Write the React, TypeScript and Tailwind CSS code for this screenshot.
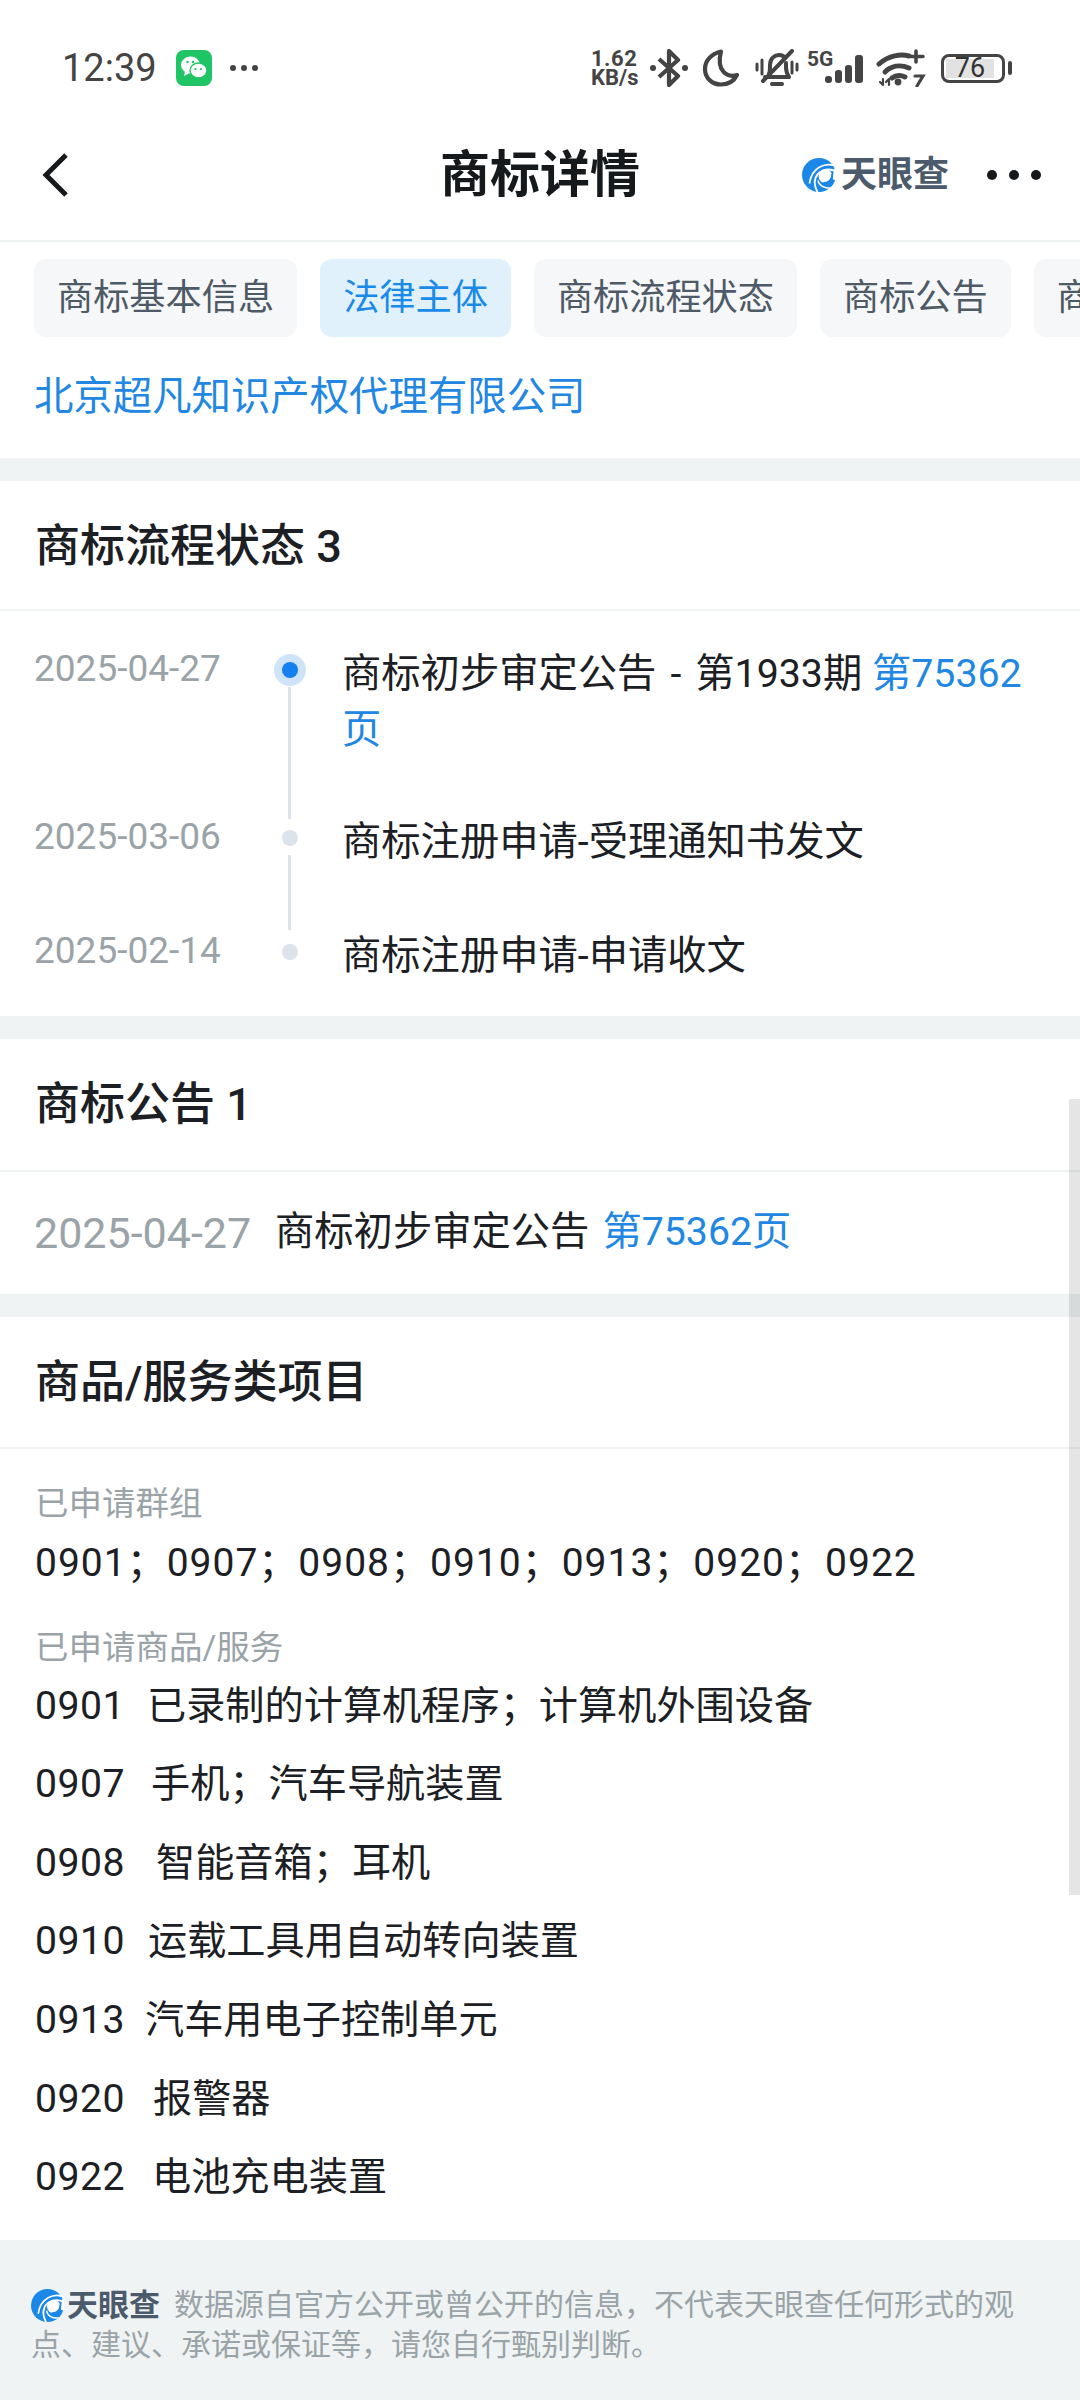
import React from 'react';

const chips = ['商标基本信息', '法律主体', '商标流程状态', '商标公告', '商标注册'];

const goods = [
    { code: '0901', name: '已录制的计算机程序；计算机外围设备', width: 'w-[112px]' },
    { code: '0907', name: '手机；汽车导航装置', width: 'w-[116px]' },
    { code: '0908', name: '智能音箱；耳机', width: 'w-[121px]' },
    { code: '0910', name: '运载工具用自动转向装置', width: 'w-[113px]' },
    { code: '0913', name: '汽车用电子控制单元', width: 'w-[110px]' },
    { code: '0920', name: '报警器', width: 'w-[118px]' },
    { code: '0922', name: '电池充电装置', width: 'w-[117px]' },
];

function LogoMark(props: { size: number }) {
    return (
        <svg width={props.size} height={props.size} viewBox="0 0 32 32" className="shrink-0">
            <circle cx="16" cy="16" r="16" fill="#1b87e6" />
            <path d="M33 8C22 3 9 9 7 24" fill="none" stroke="#fff" strokeWidth="1.6" />
            <path d="M33 13C24 8 13 12 12 22C11.6 26 13 29 15 33" fill="none" stroke="#fff" strokeWidth="1.8" />
            <path d="M15 21C16 26 21 29 27 28" fill="none" stroke="#fff" strokeWidth="1.4" />
            <circle cx="22" cy="17" r="6.5" fill="#fff" />
            <path d="M28.5 15C29 20 25 24 20 23.5" fill="none" stroke="#1b87e6" strokeWidth="2" />
            <path d="M30 10L34 10L34 22L29 20Z" fill="#fff" />
        </svg>
    );
}

function StatusIcons() {
    return (
        <div className="ml-auto mr-[68px] flex items-center">
            <div className="flex w-[50px] flex-col text-[22px] font-bold leading-[19px] text-[#444]">
                <span className="tracking-[0.5px]">1.62</span>
                <span>KB/s</span>
            </div>
            {/* bluetooth */}
            <svg width="38" height="38" viewBox="0 0 38 38" className="ml-[9px]" fill="none" stroke="#444" strokeWidth="4.2" strokeLinejoin="round">
                <path d="M9 10L28 27L19 36V2L28 11L9 28" />
                <circle cx="3" cy="19" r="3" fill="#444" stroke="none" />
                <circle cx="35" cy="19" r="3" fill="#444" stroke="none" />
            </svg>
            {/* moon */}
            <svg width="38" height="38" viewBox="0 0 38 38" className="ml-[14px]" fill="none" stroke="#444" strokeWidth="4.2" strokeLinejoin="round">
                <path d="M19 2.5C9 5 3 12 3 20C3 29 10 35.5 19 35.5C26 35.5 32 32 35 26C25 29 14 22 19 2.5Z" />
            </svg>
            {/* muted bell */}
            <svg width="44" height="38" viewBox="0 0 44 38" className="ml-[15px]" fill="none" stroke="#444" strokeWidth="4" strokeLinecap="round">
                <path d="M14 25C15 23 15 20 15 16C15 9 20 6 24 6C27 6 29 7 30 9M31 14V18C31 22 32 25 34 28H10" strokeLinejoin="round" />
                <path d="M37 2L8 32" />
                <path d="M17 35H27" />
                <path d="M2 15V21M7 11V25M37 13V24M42 15V21" strokeWidth="3" />
            </svg>
            <div className="ml-[8px] flex h-[38px] w-[70px] items-start">
                <span className="text-[21px] font-bold leading-[20px] text-[#444]">5G</span>
                {/* signal */}
                <svg width="44" height="30" viewBox="0 0 44 30" className="ml-[-8px] mt-[5px] shrink-0" fill="#444">
                    <rect x="0" y="22" width="7" height="7" rx="3" />
                    <rect x="10" y="16" width="7" height="13" rx="3" />
                    <rect x="20" y="11" width="7" height="18" rx="3" />
                    <rect x="30" y="1" width="8" height="28" rx="3" />
                </svg>
            </div>
            {/* wifi */}
            <svg width="52" height="38" viewBox="0 0 52 38" className="ml-[-1px]" fill="none" stroke="#444" strokeLinecap="round">
                <path d="M3 15C13 6 25 5 33 7" strokeWidth="5" />
                <path d="M9 23C15 17 24 15 33 19" strokeWidth="5" />
                <path d="M16 29C20 26 25 26 29 28" strokeWidth="5" />
                <path d="M40 2V13M35 7.5H47" strokeWidth="3.6" />
                <circle cx="22" cy="33" r="3.4" fill="#444" stroke="none" />
                <path d="M7 30V36M13 30V36M4 33L7 36M10 33L13 30" strokeWidth="2.2" />
                <path d="M39 27H47L41 37" strokeWidth="3.2" />
            </svg>
            {/* battery */}
            <div className="ml-[13px] flex items-center">
                <div className="flex h-[29px] w-[64px] items-center rounded-[8px] border-[3px] border-[#444] p-[2px] pr-[8px]">
                    <div className="flex h-full w-full items-center justify-center bg-[#e2e2e2] text-[27px] leading-none text-[#333]">76</div>
                </div>
                <div className="ml-[3px] h-[14px] w-[4px] rounded-full bg-[#444]" />
            </div>
        </div>
    );
}

function StatusBar() {
    return (
        <div className="flex h-[136px] items-center pl-[62px]">
            <span className="text-[38px] leading-none text-[#444]">12:39</span>
            <div className="ml-[19px] flex h-[36px] w-[36px] items-center justify-center rounded-[8px] bg-[#1fc465]">
                <svg width="28" height="26" viewBox="0 0 28 26">
                    <ellipse cx="10.5" cy="10" rx="9.5" ry="8.5" fill="#fff" />
                    <path d="M5 16L4 21L10 18Z" fill="#fff" />
                    <ellipse cx="18.5" cy="15.5" rx="8.5" ry="7.5" fill="#fff" stroke="#1fc465" strokeWidth="1.4" />
                    <circle cx="7.5" cy="7" r="1.2" fill="#1fc465" />
                    <circle cx="13" cy="7" r="1.2" fill="#1fc465" />
                    <circle cx="15.5" cy="14" r="1.1" fill="#1fc465" />
                    <circle cx="21" cy="14" r="1.1" fill="#1fc465" />
                </svg>
            </div>
            <div className="ml-[18px] flex gap-[5px]">
                <span className="h-[6px] w-[6px] rounded-full bg-[#444]" />
                <span className="h-[6px] w-[6px] rounded-full bg-[#444]" />
                <span className="h-[6px] w-[6px] rounded-full bg-[#444]" />
            </div>
            <StatusIcons />
        </div>
    );
}

function NavBar() {
    return (
        <div className="relative flex h-[78px] items-center justify-between pl-[40px] pr-[39px]">
            <svg width="30" height="46" viewBox="0 0 30 46" fill="none" stroke="#16191c" strokeWidth="5">
                <path d="M26 3L6 23L26 43" />
            </svg>
            <span className="absolute left-[440px] text-[50px] font-bold leading-none text-[#16191c]">商标详情</span>
            <div className="flex items-center">
                <LogoMark size={34} />
                <span className="ml-[5px] text-[36px] font-bold leading-none text-[#4c5b6b]">天眼查</span>
                <div className="ml-[38px] flex gap-[12px]">
                    <span className="h-[10px] w-[10px] rounded-full bg-[#16191c]" />
                    <span className="h-[10px] w-[10px] rounded-full bg-[#16191c]" />
                    <span className="h-[10px] w-[10px] rounded-full bg-[#16191c]" />
                </div>
            </div>
        </div>
    );
}

function Gap() {
    return <div className="h-[23px] bg-[#eff3f3]" />;
}

function SectionTitle(props: { title: string, height: string }) {
    return (
        <div className={`flex items-center border-b-2 border-[#eff3f3] pl-[35px] text-[45px] font-medium leading-none text-[#1c2024] ${props.height}`}>
            {props.title}
        </div>
    );
}

function TimelineRow(props: { date: string, height: string, active?: boolean, line?: string, children: React.ReactNode }) {
    return (
        <div className={`flex ${props.height}`}>
            <div className="mt-[-5px] w-[260px] pl-[34px] text-[37px] leading-[56px] text-[#9aa3a8]">{props.date}</div>
            <div className="relative mt-[-1px] flex h-[50px] w-[60px] items-center justify-center">
                {props.active ? (
                    <div className="flex h-[32px] w-[32px] items-center justify-center rounded-full bg-[#cfe4f8]">
                        <div className="h-[16px] w-[16px] rounded-full bg-[#1480f0]" />
                    </div>
                ) : (
                    <div className="h-[16px] w-[16px] rounded-full bg-[#dde3ea]" />
                )}
                {props.line && <div className={`absolute left-[28px] top-[42px] w-[3px] bg-[#dbe3ec] ${props.line}`} />}
            </div>
            <div className="ml-[22px] w-[697px] text-[39.3px] leading-[56px] text-[#1c2024]">{props.children}</div>
        </div>
    );
}

export default function App() {
    return (
        <div className="relative h-[2400px] w-[1080px] overflow-hidden bg-white font-[Roboto,'Noto_Sans_CJK_SC',sans-serif]">
            <div className="h-[242px] border-b-2 border-[#f0f3f3]">
                <StatusBar />
                <NavBar />
            </div>

            <div className="flex gap-[23px] overflow-hidden pl-[34px] pt-[17px]">
                {chips.map((chip, i) => (
                    <div
                        key={chip}
                        className={i === 1
                            ? 'flex h-[78px] shrink-0 items-center rounded-[12px] bg-[#e0f1fc] px-[23px] text-[36.2px] text-[#1a8ae8]'
                            : 'flex h-[78px] shrink-0 items-center rounded-[12px] bg-[#f5f7f8] px-[23px] text-[36.2px] text-[#4e5a66]'}
                    >
                        {chip}
                    </div>
                ))}
            </div>
            <div className="flex h-[121px] items-center pb-[2px] pl-[34px] text-[39.4px] leading-none text-[#2187e2]">
                北京超凡知识产权代理有限公司
            </div>
            <Gap />

            <SectionTitle title="商标流程状态 3" height="h-[130px] pt-[3px]" />
            <div className="pt-[35px]">
                <TimelineRow date="2025-04-27" height="h-[168px]" active line="h-[132px]">
                    商标初步审定公告<span className="mx-[14px]">-</span>第1933期 <span className="text-[#2187e2]">第75362页</span>
                </TimelineRow>
                <TimelineRow date="2025-03-06" height="h-[114px]" line="h-[75px]">
                    商标注册申请-受理通知书发文
                </TimelineRow>
                <TimelineRow date="2025-02-14" height="h-[88px]">
                    商标注册申请-申请收文
                </TimelineRow>
            </div>
            <Gap />

            <SectionTitle title="商标公告 1" height="h-[133px]" />
            <div className="flex h-[122px] items-center pl-[34px] text-[39.3px] leading-none">
                <span className="w-[241px] text-[43px] text-[#9aa3a8]">2025-04-27</span>
                <span className="text-[#1c2024]">商标初步审定公告</span>
                <span className="ml-[13px] text-[#2187e2]">第75362页</span>
            </div>
            <Gap />

            <SectionTitle title="商品/服务类项目" height="h-[132px]" />
            <div className="pl-[35px] pt-[33px]">
                <div className="text-[33.5px] leading-[44px] text-[#9aa3a8]">已申请群组</div>
                <div className="mt-[9px] text-[39px] leading-[56px] tracking-[1px] text-[#1c2024]">0901；0907；0908；0910；0913；0920；0922</div>
                <div className="mt-[35px] h-[41px] text-[33.5px] leading-[44px] text-[#9aa3a8]">已申请商品/服务</div>
                <div className="pb-[23px]">
                    {goods.map((item) => (
                        <div key={item.code} className="flex h-[78.6px] items-center text-[39.2px] leading-none text-[#1c2024]">
                            <span className={`shrink-0 tracking-[0.5px] ${item.width}`}>{item.code}</span>
                            <span>{item.name}</span>
                        </div>
                    ))}
                </div>
            </div>

            <div className="h-[161px] bg-[#eff3f3] pl-[31px] pr-[50px] pt-[45px] text-[30px] leading-[40px] text-[#9aa3a8]">
                <span className="mr-[14px] inline-flex h-[40px] items-center align-top">
                    <LogoMark size={33} />
                    <span className="ml-[3px] text-[31px] font-bold leading-none text-[#4c5b6b]">天眼查</span>
                </span>
                数据源自官方公开或曾公开的信息，不代表天眼查任何形式的观点、建议、承诺或保证等，请您自行甄别判断。
            </div>

            {/* overlay scrollbar */}
            <div className="absolute right-0 top-[1099px] h-[796px] w-[11px] bg-black/10" />
        </div>
    );
}
